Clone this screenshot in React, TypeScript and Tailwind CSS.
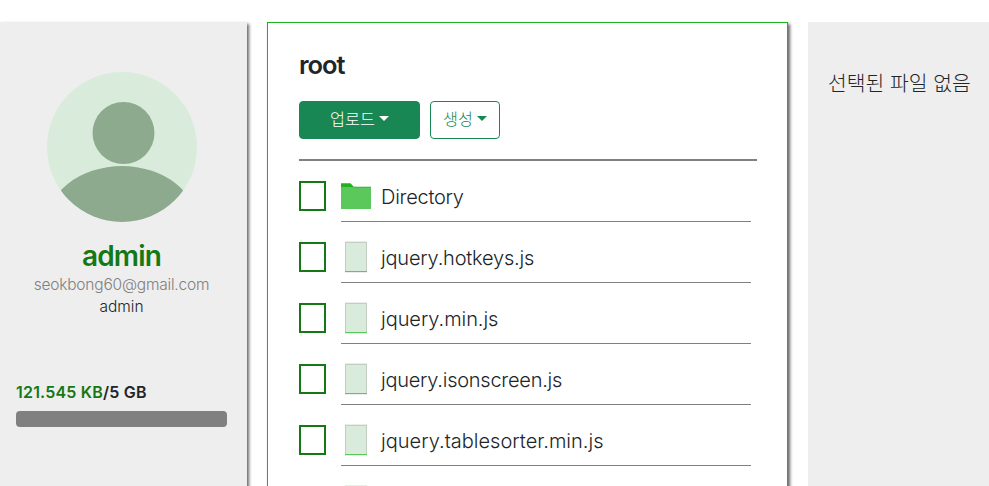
import type { ReactNode } from 'react';

const files = [
  { name: 'Directory', folder: true, text: 'tracking-[-0.25px]' },
  { name: 'jquery.hotkeys.js', folder: false, text: 'tracking-[-0.2px]' },
  { name: 'jquery.min.js', folder: false, text: 'tracking-[-0.05px]' },
  { name: 'jquery.isonscreen.js', folder: false, text: 'tracking-[-0.25px]' },
  { name: 'jquery.tablesorter.min.js', folder: false, text: 'tracking-[0.02px]' },
  { name: '', folder: false, text: '' },
];

function Avatar() {
  return (
    <svg width="150" height="150" viewBox="0 0 150 150" className="mx-auto block">
      <defs>
        <clipPath id="avatar">
          <circle cx="75" cy="75" r="75" />
        </clipPath>
      </defs>
      <g clipPath="url(#avatar)">
        <rect width="150" height="150" fill="#d9ecdb" />
        <circle cx="76.5" cy="61" r="31" fill="#8eaa8e" />
        <ellipse cx="75" cy="154" rx="76" ry="60" fill="#8eaa8e" />
      </g>
    </svg>
  );
}

function FolderIcon() {
  return (
    <svg width="30" height="30" viewBox="0 0 30 30" className="block">
      <path d="M12 5h18v1H13z" fill="#c5e6c5" />
      <path d="M0 6h30v22H0z" fill="#5ac85a" />
      <path d="M12 6h18v1H13z" fill="#4cb84c" />
      <path d="M0 2.3h9.5l3.5 3.7H0z" fill="#20b020" />
    </svg>
  );
}

function FileIcon() {
  return (
    <svg width="30" height="32" viewBox="0 0 30 32" className="-mt-px block">
      <rect x="4" y="0" width="22" height="32" fill="#e9eee9" />
      <rect x="4" y="1" width="22" height="30" fill="#c3cdc3" />
      <rect x="5" y="2" width="20" height="28" fill="#d9ecdb" />
      <rect x="4" y="30" width="22" height="1" fill="#5ac85a" />
    </svg>
  );
}

function Caret() {
  return <span className="mb-px inline-block border-x-[5px] border-t-[5px] border-x-transparent border-t-current" />;
}

function Button({ className, children }: { className: string; children: ReactNode }) {
  return (
    <button className={`flex h-[38px] items-center justify-center gap-1 rounded border border-[#198754] pb-0.5 text-[16.3px] font-light ${className}`}>
      {children}
      <Caret />
    </button>
  );
}

export default function App() {
  return (
    <div className="flex h-[486px] w-[989px] gap-5 overflow-hidden bg-white pt-[22px] font-['Inter','Noto_Sans_CJK_KR',sans-serif] text-[#212529]">
      <aside className="h-[520px] w-[247px] shrink-0 bg-[#eee] pt-[50px] shadow-[2px_2px_3px_#666]">
        <div className="w-[243px]">
          <Avatar />
          <h2 className="mt-[17px] text-center text-[28px] leading-[34px] font-semibold tracking-[-0.8px] text-[#147814]">admin</h2>
          <p className="mt-[3px] text-center text-[15.5px] leading-[18px] font-light tracking-[-0.2px] text-[#808080]">seokbong60@gmail.com</p>
          <p className="mt-1 text-center text-[15.5px] leading-[18px] font-light">admin</p>
        </div>
        <div className="mt-16 pr-5 pl-4">
          <p className="text-[16px] leading-6 font-semibold tracking-[0.2px]">
            <span className="text-[#147814]">121.545 KB</span>/5 GB
          </p>
          <div className="mt-[7px] h-4 rounded bg-[#808080]" />
        </div>
      </aside>

      <main className="h-[520px] w-[521px] shrink-0 border border-[#20b020] pt-[26px] pr-[30px] pl-[31px] shadow-[2px_2px_3px_#666]">
        <h1 className="text-[25.5px] leading-8 font-semibold tracking-[-1px]">root</h1>
        <div className="mt-5 flex gap-2.5">
          <Button className="w-[121px] bg-[#198754] text-white">업로드</Button>
          <Button className="w-[70px] text-[#198754]">생성</Button>
        </div>
        <div className="mt-5 h-0.5 bg-[#808080]" />
        <ul className="pt-5">
          {files.map((file) => (
            <li key={file.name} className="flex h-[61px]">
              <span className="h-[30px] w-[27px] shrink-0 border-2 border-[#147814] bg-white" />
              <div className="ml-[15px] flex h-[41px] w-[410px] border-b border-[#808080]">
                {file.folder ? <FolderIcon /> : <FileIcon />}
                <span className={`ml-2.5 text-[20px] leading-8 font-light ${file.text}`}>{file.name}</span>
              </div>
            </li>
          ))}
        </ul>
      </main>

      <aside className="h-[520px] w-[181px] shrink-0 bg-[#eee] pt-[47px] pl-5">
        <p className="text-[20.4px] leading-[30px] font-light whitespace-nowrap">선택된 파일 없음</p>
      </aside>
    </div>
  );
}
